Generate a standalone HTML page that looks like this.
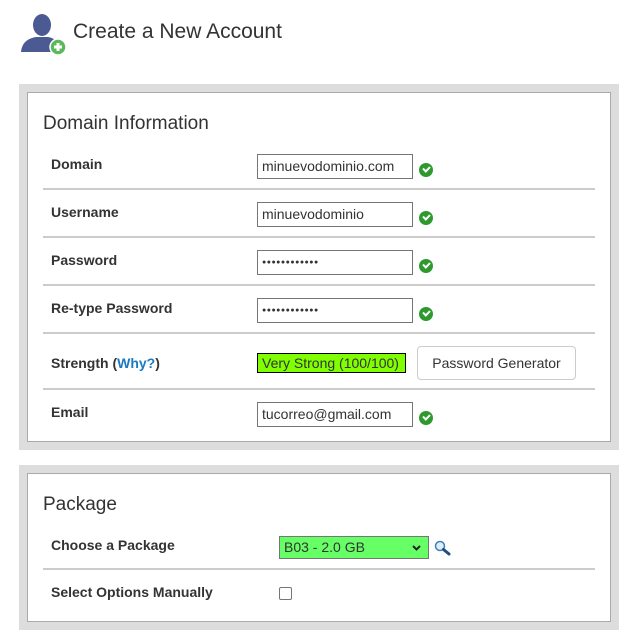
<!DOCTYPE html>
<html><head><style>
body{margin:0;width:627px;height:636px;background:#fff;font-family:"Liberation Sans",sans-serif;color:#333;position:relative;overflow:hidden}
.a{position:absolute}
.panel{position:absolute;background:#ddd}
.inner{position:absolute;background:#fff;border:1px solid #aaa;box-sizing:border-box}
.lbl{position:absolute;left:51px;font-size:14px;font-weight:bold;color:#333}
.inp{position:absolute;left:257px;width:156px;height:25px;border:1px solid #767676;box-sizing:border-box;font-size:14px;line-height:23px;padding-left:4px;color:#333;background:#fff}
.sep{position:absolute;left:43px;width:552px;height:2px;background:#ccc}
.chk{position:absolute;left:419px;width:14px;height:14px;border-radius:50%;background:#2e9a2e}
.chk:after{content:"";position:absolute;left:4px;top:3px;width:5px;height:3px;border-left:2px solid #fff;border-bottom:2px solid #fff;transform:rotate(-45deg)}
</style></head><body>
<svg class="a" style="left:20px;top:11px" width="46" height="46" viewBox="0 0 46 46">
<ellipse cx="22" cy="14" rx="9" ry="11" fill="#4c5a93"/>
<path d="M1 41 C2 30 10 27 16 26 L28 26 C34 27 40 31 41 41 Z" fill="#4c5a93"/>
<circle cx="38" cy="36" r="8" fill="#5bb85b" stroke="#fff" stroke-width="1.5"/>
<rect x="34" y="34.5" width="8" height="3" fill="#fff"/><rect x="36.5" y="32" width="3" height="8" fill="#fff"/>
</svg>
<div class="a" style="left:73px;top:20px;font-size:21px;color:#333">Create a New Account</div>

<div class="panel" style="left:19px;top:84px;width:600px;height:366px"></div>
<div class="inner" style="left:27px;top:92px;width:584px;height:350px"></div>
<div class="a" style="left:43px;top:113px;font-size:19px;color:#333">Domain Information</div>

<div class="lbl" style="top:156px">Domain</div>
<div class="inp" style="top:154px">minuevodominio.com</div><div class="chk" style="top:163px"></div>
<div class="sep" style="top:188px"></div>
<div class="lbl" style="top:204px">Username</div>
<div class="inp" style="top:202px">minuevodominio</div><div class="chk" style="top:211px"></div>
<div class="sep" style="top:236px"></div>
<div class="lbl" style="top:252px">Password</div>
<div class="inp" style="top:250px;font-size:7px;letter-spacing:0.5px">●●●●●●●●●●●●</div><div class="chk" style="top:259px"></div>
<div class="sep" style="top:284px"></div>
<div class="lbl" style="top:300px">Re-type Password</div>
<div class="inp" style="top:298px;font-size:7px;letter-spacing:0.5px">●●●●●●●●●●●●</div><div class="chk" style="top:307px"></div>
<div class="sep" style="top:332px"></div>
<div class="lbl" style="top:355px">Strength (<span style="color:#1a7ac2">Why?</span>)</div>
<div class="a" style="left:257px;top:353px;width:149px;height:20px;background:#80ff00;border:1px solid #000;box-sizing:border-box;font-size:14px;line-height:18px;padding-left:4px;color:#333">Very Strong (100/100)</div>
<div class="a" style="left:417px;top:346px;width:159px;height:34px;border:1px solid #ccc;border-radius:4px;box-sizing:border-box;font-size:14px;line-height:32px;text-align:center;color:#333">Password Generator</div>
<div class="sep" style="top:388px"></div>
<div class="lbl" style="top:404px">Email</div>
<div class="inp" style="top:402px">tucorreo@gmail.com</div><div class="chk" style="top:411px"></div>

<div class="panel" style="left:19px;top:465px;width:600px;height:165px"></div>
<div class="inner" style="left:27px;top:473px;width:584px;height:149px"></div>
<div class="a" style="left:43px;top:494px;font-size:19px;color:#333">Package</div>
<div class="lbl" style="top:537px">Choose a Package</div>
<div class="a" style="left:279px;top:536px;width:150px;height:23px;background:#66ff66;border:1px solid #767676;box-sizing:border-box;font-size:14px;line-height:21px;padding-left:4px;color:#333">B03 - 2.0 GB<svg style="position:absolute;right:7px;top:8px" width="9" height="6" viewBox="0 0 9 6"><path d="M1 1 L4.5 4.5 L8 1" stroke="#222" stroke-width="2" fill="none"/></svg></div>
<svg class="a" style="left:434px;top:540px" width="18" height="16" viewBox="0 0 18 16"><circle cx="6" cy="6" r="4.5" fill="#dbeefc" stroke="#4a7cae" stroke-width="1.5"/><path d="M9.5 9.5 L15 14" stroke="#1d4e80" stroke-width="3" stroke-linecap="round"/></svg>
<div class="a" style="left:43px;top:568px;width:552px;height:2px;background:#ccc"></div>
<div class="lbl" style="top:584px">Select Options Manually</div>
<div class="a" style="left:279px;top:587px;width:13px;height:13px;border:1px solid #767676;border-radius:2px;box-sizing:border-box"></div>
</body></html>
